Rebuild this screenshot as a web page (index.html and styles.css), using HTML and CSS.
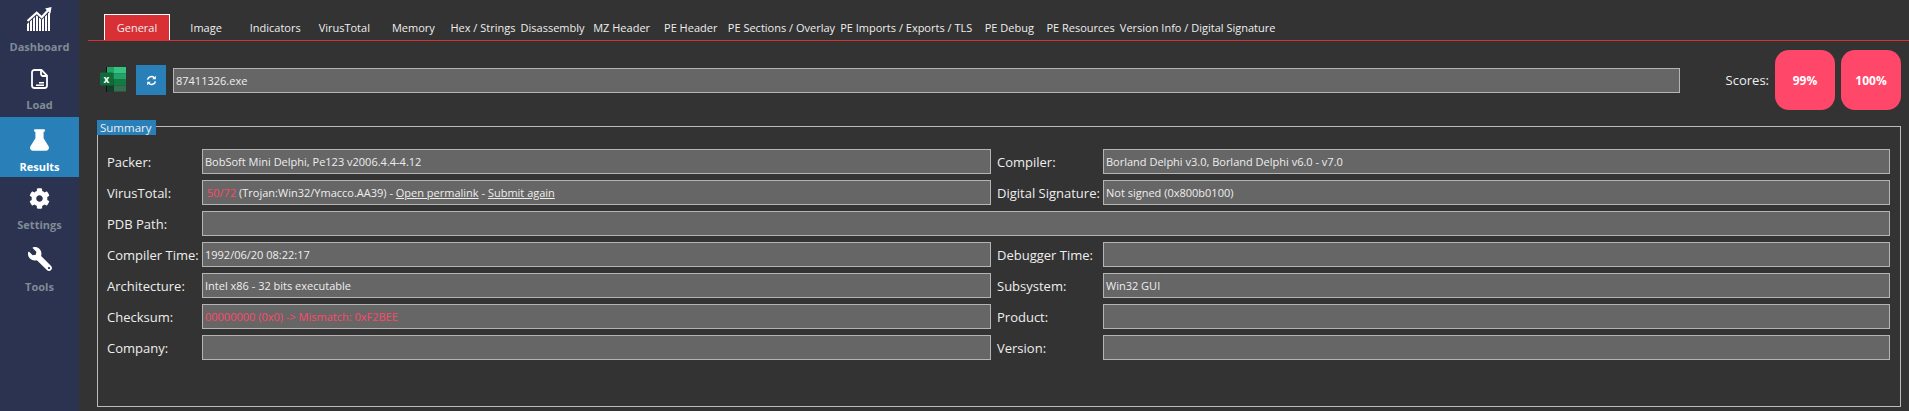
FILE: index.html
```html
<!DOCTYPE html>
<html lang="en">
<head>
    <meta charset="UTF-8">
    <title>Results</title>
    <link rel="stylesheet" href="styles.css">
</head>
<body>
    <!-- Sidebar -->
    <nav class="sidebar">
        <a class="side-item first">
            <svg class="side-icon" width="25" height="24" viewBox="0 0 25 24">
                <defs>
                    <pattern id="stripes" width="3" height="24" patternUnits="userSpaceOnUse">
                        <rect width="2" height="24" fill="#fff"/>
                    </pattern>
                </defs>
                <path d="M0 17L9.700 8.500l5 4.500L23 4.500 24 24H0z" fill="url(#stripes)"/>
                <path d="M0.500 14L9.700 5.700l5 4.600 7.600-8.300" fill="none" stroke="#fff" stroke-width="2.200"/>
                <path d="M18 1.500L24.500 0 23.500 6.500z" fill="#fff"/>
            </svg>
            <span>Dashboard</span>
        </a>
        <a class="side-item raised">
            <svg class="side-icon" width="17" height="20" viewBox="0 0 17 20">
                <path d="M3.500 1h7L16 6.500V16.500a2.500 2.500 0 0 1-2.500 2.500h-10A2.500 2.500 0 0 1 1 16.500v-13A2.500 2.500 0 0 1 3.500 1z" fill="none" stroke="#fff" stroke-width="1.800"/>
                <path d="M10 1v4a2 2 0 0 0 2 2h4" fill="none" stroke="#fff" stroke-width="1.800"/>
                <path d="M8 13h5v1.500H8zM5 15.500h8V17H5z" fill="#fff"/>
            </svg>
            <span>Load</span>
        </a>
        <a class="side-item active">
            <svg class="side-icon" width="19" height="22" viewBox="0 0 448 512">
                <path d="M437.200 403.500L320 215V64h8c13.300 0 24-10.700 24-24V24c0-13.300-10.700-24-24-24H120c-13.300 0-24 10.700-24 24v16c0 13.300 10.700 24 24 24h8v151L10.800 403.500C-18.500 450.600 15.300 512 70.900 512h306.200c55.700 0 89.400-61.500 60.100-108.500z" fill="#fff"/>
            </svg>
            <span>Results</span>
        </a>
        <a class="side-item raised">
            <svg class="side-icon" width="21" height="21" viewBox="0 0 512 512">
                <path d="M487.400 315.700l-42.600-24.600c4.300-23.200 4.300-47 0-70.200l42.600-24.600c4.900-2.800 7.100-8.600 5.500-14-11.100-35.600-30-67.800-54.700-94.600-3.800-4.100-10-5.100-14.800-2.300L380.800 110c-17.900-15.400-38.500-27.300-60.800-35.100V25.800c0-5.600-3.900-10.500-9.400-11.700-36.700-8.200-74.300-7.800-109.200 0-5.500 1.200-9.400 6.100-9.400 11.700V75c-22.200 7.900-42.800 19.800-60.800 35.100L88.700 85.500c-4.900-2.800-11-1.900-14.800 2.300-24.700 26.700-43.600 58.900-54.700 94.600-1.700 5.400.6 11.200 5.500 14L67.300 221c-4.300 23.200-4.300 47 0 70.200l-42.600 24.600c-4.900 2.800-7.100 8.600-5.500 14 11.100 35.600 30 67.800 54.700 94.600 3.800 4.100 10 5.100 14.800 2.300l42.600-24.600c17.900 15.400 38.500 27.300 60.800 35.100v49.200c0 5.600 3.900 10.500 9.400 11.700 36.700 8.200 74.300 7.800 109.200 0 5.500-1.200 9.400-6.100 9.400-11.700v-49.200c22.200-7.900 42.800-19.800 60.800-35.100l42.600 24.600c4.900 2.800 11 1.900 14.800-2.300 24.700-26.700 43.600-58.900 54.700-94.600 1.500-5.500-.7-11.300-5.600-14.100zM256 336c-44.100 0-80-35.900-80-80s35.900-80 80-80 80 35.900 80 80-35.900 80-80 80z" fill="#fff"/>
            </svg>
            <span>Settings</span>
        </a>
        <a class="side-item">
            <svg class="side-icon" width="24" height="24" viewBox="0 0 512 512">
                <path transform="matrix(-1 0 0 1 512 0)" d="M507.730 109.100c-2.240-9.030-13.540-12.090-20.120-5.510l-74.360 74.360-67.880-11.310-11.310-67.880 74.360-74.360c6.620-6.620 3.430-17.900-5.660-20.160-47.380-11.740-99.550.91-136.580 37.930-39.640 39.640-50.550 97.100-34.050 147.200L18.740 402.760c-24.990 24.990-24.990 65.510 0 90.500 24.990 24.990 65.510 24.990 90.500 0l213.210-213.210c50.120 16.710 107.470 5.680 147.370-34.220 37.070-37.070 49.700-89.320 37.910-136.730zM64 472c-13.250 0-24-10.750-24-24 0-13.260 10.750-24 24-24s24 10.740 24 24c0 13.250-10.750 24-24 24z" fill="#fff"/>
            </svg>
            <span>Tools</span>
        </a>
    </nav>

    <!-- Main Content -->
    <main class="content">
        <div class="tabs">
            <a class="tab active">General</a>
            <a class="tab">Image</a>
            <a class="tab">Indicators</a>
            <a class="tab">VirusTotal</a>
            <a class="tab">Memory</a>
            <a class="tab">Hex / Strings</a>
            <a class="tab">Disassembly</a>
            <a class="tab">MZ Header</a>
            <a class="tab">PE Header</a>
            <a class="tab">PE Sections / Overlay</a>
            <a class="tab">PE Imports / Exports / TLS</a>
            <a class="tab">PE Debug</a>
            <a class="tab">PE Resources</a>
            <a class="tab">Version Info / Digital Signature</a>
        </div>

        <div class="toolbar">
            <svg class="excel" width="26" height="26" viewBox="0 0 26 26">
                <rect x="6" y="0" width="1" height="25" fill="#111"/>
                <rect x="7" y="0" width="7" height="6.500" fill="#21a366"/>
                <rect x="7" y="6.500" width="7" height="6" fill="#107c41"/>
                <rect x="7" y="12.500" width="7" height="6" fill="#185c37"/>
                <rect x="7" y="18.500" width="7" height="6" fill="#123f28"/>
                <rect x="14" y="0" width="12" height="6.500" fill="#33c481"/>
                <rect x="14" y="6.500" width="12" height="6" fill="#21a366"/>
                <rect x="14" y="12.500" width="12" height="6" fill="#107c41"/>
                <rect x="14" y="18.500" width="12" height="6" fill="#33704f"/>
                <rect x="0" y="5.500" width="13" height="13" rx="1" fill="#0f6b3a"/>
                <text x="6.500" y="15.500" class="excel-x">x</text>
            </svg>
            <button class="refresh">
                <svg width="11" height="11" viewBox="0 0 14 14">
                    <path d="M2 6a5 5 0 0 1 8.500-2.500M12 8a5 5 0 0 1-8.500 2.500" fill="none" stroke="#fff" stroke-width="2"/>
                    <path d="M12.500 1v4.500H8zM1.500 13V8.500H6z" fill="#fff"/>
                </svg>
            </button>
            <div class="field file-name">87411326.exe</div>
            <span class="scores-label">Scores:</span>
            <div class="score">99%</div>
            <div class="score">100%</div>
        </div>

        <section class="summary">
            <h2 class="summary-title">Summary</h2>
            <div class="summary-grid">
                <label>Packer:</label>
                <div class="field">BobSoft Mini Delphi, Pe123 v2006.4.4-4.12</div>
                <label class="right">Compiler:</label>
                <div class="field">Borland Delphi v3.0, Borland Delphi v6.0 - v7.0</div>

                <label>VirusTotal:</label>
                <div class="field"><span class="bad vt-count">50/72</span> (Trojan:Win32/Ymacco.AA39) - <u>Open permalink</u> - <u>Submit again</u></div>
                <label class="right">Digital Signature:</label>
                <div class="field">Not signed (0x800b0100)</div>

                <label>PDB Path:</label>
                <div class="field wide"></div>

                <label>Compiler Time:</label>
                <div class="field">1992/06/20 08:22:17</div>
                <label class="right">Debugger Time:</label>
                <div class="field"></div>

                <label>Architecture:</label>
                <div class="field">Intel x86 - 32 bits executable</div>
                <label class="right">Subsystem:</label>
                <div class="field">Win32 GUI</div>

                <label>Checksum:</label>
                <div class="field bad">00000000 (0x0) -&gt; Mismatch: 0xF2BEE</div>
                <label class="right">Product:</label>
                <div class="field"></div>

                <label>Company:</label>
                <div class="field"></div>
                <label class="right">Version:</label>
                <div class="field"></div>
            </div>
        </section>
    </main>
</body>
</html>
```

FILE: styles.css
```css
/* General Styles */
html, body {
    height: 100%;
}
body {
    display: flex;
    margin: 0;
    overflow: hidden;
    background-color: #333;
    color: #eee;
    font-family: "Open Sans", sans-serif;
    font-size: 13px;
}

/* Sidebar */
.sidebar {
    width: 79px;
    flex-shrink: 0;
    background: #2b3350;
}
.side-item {
    display: flex;
    flex-direction: column;
    align-items: center;
    justify-content: flex-end;
    box-sizing: border-box;
    height: 60px;
    padding-bottom: 3px;
    color: #7f8c96;
    font-size: 11px;
    font-weight: 700;
}
.side-item.first {
    height: 57px;
}
.side-item.raised {
    padding-bottom: 5px;
}
.side-item.active {
    background: #2980b9;
    color: #fff;
}
.side-icon {
    margin-bottom: 8px;
}

/* Tabs */
.content {
    flex: 1;
    min-width: 0;
}
.tabs {
    display: flex;
    box-sizing: border-box;
    height: 41px;
    margin-left: 9px;
    padding: 14px 0 0 16px;
    border-bottom: 1px solid #d93036;
    font-size: 11px;
}
.tab {
    min-width: 66px;
    height: 26px;
    margin-right: 3.100px;
    box-sizing: border-box;
    padding: 0 1px;
    border-top: 1px solid transparent;
    color: #eee;
    line-height: 25px;
    text-align: center;
    white-space: nowrap;
}
.tab.active {
    border: 1px solid #fff;
    border-bottom: none;
    background: #d93036;
}

/* Toolbar */
.toolbar {
    display: flex;
    align-items: center;
    height: 60px;
    margin: 9px 8px 0 21px;
}
.excel {
    flex-shrink: 0;
}
.excel-x {
    fill: #fff;
    font-size: 10px;
    font-weight: 700;
    text-anchor: middle;
}
.refresh {
    display: flex;
    align-items: center;
    justify-content: center;
    width: 30px;
    height: 30px;
    margin: 0 7px 0 10px;
    padding: 0;
    border: none;
    background: #2980b9;
}
.file-name {
    flex: 1;
}
.scores-label {
    margin-left: 46px;
}
.score {
    display: flex;
    align-items: center;
    justify-content: center;
    width: 60px;
    height: 60px;
    margin-left: 6px;
    border-radius: 14px;
    background: #ff4769;
    color: #fff;
    font-size: 12px;
    font-weight: 700;
}

/* Fields */
.field {
    box-sizing: border-box;
    height: 25px;
    padding: 0 2px;
    border: 1px solid #b4b4b4;
    background: #666;
    color: #eee;
    font-size: 11px;
    line-height: 23px;
    white-space: nowrap;
}
.wide {
    grid-column: 2 / 5;
}
.bad {
    color: #ff4769;
}
.vt-count {
    margin-left: 2px;
}

/* Summary */
.summary {
    box-sizing: border-box;
    height: 281px;
    margin: 16px 8px 0 18px;
    border: 1px solid #bbb;
}
.summary-title {
    width: fit-content;
    margin: -7px 0 0 -1px;
    padding: 0 4px 0 3px;
    background: #2980b9;
    color: #eee;
    font-size: 11.500px;
    font-weight: 400;
    line-height: 15px;
}
.summary-grid {
    display: grid;
    grid-template-columns: 95px 789px 112px 787px;
    row-gap: 6px;
    align-items: center;
    margin: 14px 0 0 9px;
}
.summary-grid label.right {
    padding-left: 6px;
}
```
